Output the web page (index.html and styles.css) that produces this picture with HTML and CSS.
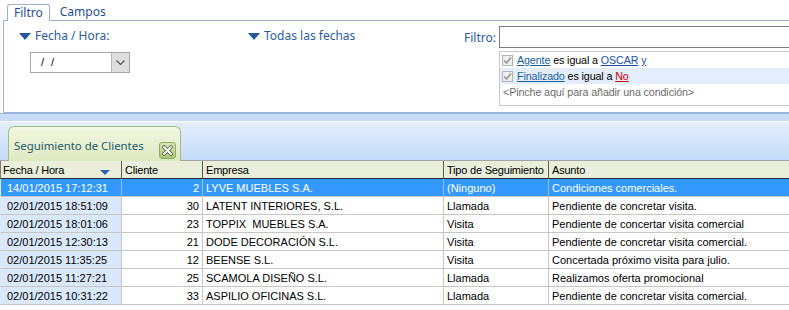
FILE: index.html
```html
<!DOCTYPE html>
<html lang="es">
<head>
  <meta charset="UTF-8">
  <title>Seguimiento de Clientes</title>
  <link rel="stylesheet" href="styles.css">
</head>
<body>
  <!-- Filtros -->
  <div class="filtros">
    <div class="tabs">
      <span class="tab activo">Filtro</span>
      <span class="tab">Campos</span>
    </div>
    <div class="panel">
      <div class="col fecha">
        <div class="grupo"><span class="flecha"></span>Fecha / Hora:</div>
        <div class="combo">
          <span class="valor">/ /</span>
          <span class="boton">
            <svg width="9" height="6" viewBox="0 0 9 6"><path d="M0.5 0.5 L4.5 4.5 L8.5 0.5" fill="none" stroke="#555" stroke-width="1.2"/></svg>
          </span>
        </div>
      </div>
      <div class="col todas">
        <div class="grupo"><span class="flecha"></span>Todas las fechas</div>
      </div>
      <div class="col cond">
        <div class="fila-filtro">
          <label>Filtro:</label>
          <div class="caja"></div>
        </div>
        <div class="condiciones">
          <div class="cond-fila">
            <span class="check"><svg width="9" height="9" viewBox="0 0 9 9"><path d="M1 4.5 L3.5 7 L8 1.5" fill="none" stroke="#9a9a9a" stroke-width="1.6"/></svg></span>
            <a class="campo">Agente</a>&nbsp;es igual a&nbsp;<a class="valor-link">OSCAR</a>&nbsp;<a class="valor-link">y</a>
          </div>
          <div class="cond-fila marcada">
            <span class="check"><svg width="9" height="9" viewBox="0 0 9 9"><path d="M1 4.5 L3.5 7 L8 1.5" fill="none" stroke="#9a9a9a" stroke-width="1.6"/></svg></span>
            <a class="campo">Finalizado</a>&nbsp;es igual a&nbsp;<a class="rojo">No</a>
          </div>
          <div class="cond-fila nueva">&lt;Pinche aquí para añadir una condición&gt;</div>
        </div>
      </div>
    </div>
  </div>

  <!-- Documentos -->
  <div class="banda"></div>
  <div class="pestanas">
    <div class="pestana">
      <span class="titulo">Seguimiento de Clientes</span>
      <span class="cerrar">
        <svg width="11" height="11" viewBox="0 0 11 11">
          <path d="M2 2 L9 9 M9 2 L2 9" stroke="#4b5a3a" stroke-width="3.6" stroke-linecap="round"/>
          <path d="M2 2 L9 9 M9 2 L2 9" stroke="#fff" stroke-width="2" stroke-linecap="round"/>
        </svg>
      </span>
    </div>
  </div>

  <table class="rejilla">
    <colgroup>
      <col class="c-fecha"><col class="c-cliente"><col class="c-empresa"><col class="c-tipo"><col class="c-asunto">
    </colgroup>
    <thead>
      <tr>
        <th>Fecha / Hora<span class="orden"></span></th>
        <th>Cliente</th>
        <th>Empresa</th>
        <th>Tipo de Seguimiento</th>
        <th>Asunto</th>
      </tr>
    </thead>
    <tbody>
      <tr class="sel"><td class="f">14/01/2015 17:12:31</td><td class="n">2</td><td>LYVE MUEBLES S.A.</td><td>(Ninguno)</td><td>Condiciones comerciales.</td></tr>
      <tr><td class="f">02/01/2015 18:51:09</td><td class="n">30</td><td>LATENT INTERIORES, S.L.</td><td>Llamada</td><td>Pendiente de concretar visita.</td></tr>
      <tr><td class="f">02/01/2015 18:01:06</td><td class="n">23</td><td>TOPPIX&nbsp; MUEBLES S.A.</td><td>Visita</td><td>Pendiente de concertar visita comercial</td></tr>
      <tr><td class="f">02/01/2015 12:30:13</td><td class="n">21</td><td>DODE DECORACIÓN S.L.</td><td>Visita</td><td>Pendiente de concretar visita comercial.</td></tr>
      <tr><td class="f">02/01/2015 11:35:25</td><td class="n">12</td><td>BEENSE S.L.</td><td>Visita</td><td>Concertada próximo visita para julio.</td></tr>
      <tr><td class="f">02/01/2015 11:27:21</td><td class="n">25</td><td>SCAMOLA DISEÑO S.L.</td><td>Llamada</td><td>Realizamos oferta promocional</td></tr>
      <tr><td class="f">02/01/2015 10:31:22</td><td class="n">33</td><td>ASPILIO OFICINAS S.L.</td><td>Llamada</td><td>Pendiente de concretar visita comercial.</td></tr>
    </tbody>
  </table>
</body>
</html>
```

FILE: styles.css
```css
body { margin: 0; font-family: "Liberation Sans", Arial, sans-serif; font-size: 11px; background: #fff; overflow: hidden; }

/* filtros */
.tabs { display: flex; align-items: flex-end; height: 20px; padding-left: 7px; }
.tab { font-family: "Noto Sans", sans-serif; font-size: 12px; color: #1f4f8f; height: 16px; line-height: 16px; padding: 0 6px; }
.tab.activo { position: relative; z-index: 1; background: #fff; border: 1px solid #9db3d1; border-bottom: none; border-radius: 3px 3px 0 0; margin-bottom: -1px; }
.tab + .tab { margin-left: 4px; }

.panel { display: flex; height: 91px; margin-left: 3px; padding-left: 15px; border-top: 1px solid #9db3d1; border-left: 1px solid #9db3d1; border-bottom: 1px solid #97b2d6; }
.col { padding-top: 8px; }
.fecha { width: 229px; }
.todas { width: 215px; }
.cond { flex: 1; padding-top: 5px; }

.grupo { font-family: "Noto Sans", sans-serif; font-size: 12px; color: #2d5c9c; line-height: 14px; display: flex; align-items: center; }
.flecha { width: 0; height: 0; border-left: 6px solid transparent; border-right: 6px solid transparent; border-top: 7px solid #2457a0; margin-right: 4px; }

.combo { display: flex; width: 98px; height: 19px; margin: 9px 0 0 11px; border: 1px solid #a6a6a6; }
.combo .valor { flex: 1; padding-left: 10px; line-height: 19px; letter-spacing: 2px; }
.combo .boton { width: 17px; background: #dedede; border-left: 1px solid #b4b4b4; display: flex; align-items: center; justify-content: center; }

.fila-filtro { display: flex; align-items: center; }
.fila-filtro label { width: 33px; padding-right: 3px; text-align: right; font-family: "Noto Sans", sans-serif; font-size: 12px; color: #2d5c9c; }
.caja { flex: 1; height: 20px; border: 1px solid #7c7c7c; margin-right: -4px; }

.condiciones { margin: 3px -4px 0 36px; height: 53px; border: 1px solid #c8c8c8; font-size: 10.7px; letter-spacing: -0.1px; }
.cond-fila { display: flex; align-items: center; height: 16px; padding-left: 2px; white-space: nowrap; }
.cond-fila.marcada { background: #e4edfb; }
.cond-fila.nueva { color: #6b6b6b; padding-left: 3px; }
.check { width: 11px; height: 11px; box-sizing: border-box; border: 1px solid #b3b3b3; background: #efefef; margin-right: 4px; display: flex; align-items: center; justify-content: center; }
.campo { color: #17609c; text-decoration: underline; }
.valor-link { color: #1c4fa3; text-decoration: underline; }
.rojo { color: #d00000; text-decoration: underline; }

/* documentos */
.banda { height: 7px; background: #c6dbf6; border-top: 1px solid #9bb6da; border-bottom: 1px solid #fff; }
.pestanas { display: flex; align-items: flex-end; height: 38px; padding-left: 8px; background: linear-gradient(#e4eefc, #c4dbf9); border-bottom: 1px solid #a3a3a3; }
.pestana { position: relative; display: flex; width: 171px; height: 34px; margin-bottom: -1px; border: 1px solid #a3bf7b; border-bottom: none; border-radius: 6px 6px 0 0; background: linear-gradient(#f2f7e2, #dde9bf); }
.pestana .titulo { font-family: "Noto Sans", sans-serif; font-size: 11.4px; color: #1f5a70; padding: 11px 0 0 5px; }
.cerrar { display: flex; align-items: center; justify-content: center; width: 15px; height: 15px; margin: 15px 4px 0 auto; border: 1px solid #8fae62; border-radius: 3px; background: linear-gradient(#d6e6b0, #a9c87a); }

/* rejilla */
.rejilla { border-collapse: separate; border-spacing: 0; table-layout: fixed; width: 800px; }
.c-fecha { width: 122px; }
.c-cliente { width: 81px; }
.c-empresa { width: 241px; }
.c-tipo { width: 105px; }
.rejilla th { height: 17px; padding: 0 3px; background: #e9efda; border-right: 1px solid #5a5a5a; border-bottom: 1px solid #2b2b2b; font-weight: normal; text-align: left; white-space: nowrap; overflow: hidden; letter-spacing: -0.2px; }
.rejilla th:first-child { border-left: 1px solid #7a7a7a; padding-left: 2px; }
.orden { float: right; width: 0; height: 0; margin: 6px 8px 0 0; border-left: 5px solid transparent; border-right: 5px solid transparent; border-top: 5px solid #2f63b0; }
.rejilla td { height: 17px; padding: 0 3px; border-right: 1px solid #c6c6c6; border-bottom: 1px solid #c6c6c6; white-space: nowrap; overflow: hidden; }
.rejilla td.f { background: #d9e8fa; padding-left: 6px; border-left: 1px solid #d9e8fa; }
.rejilla td.n { text-align: right; }
.rejilla tr.sel td { background: #3399ff; color: #fff; border-right-color: #8fc3f8; }
```
